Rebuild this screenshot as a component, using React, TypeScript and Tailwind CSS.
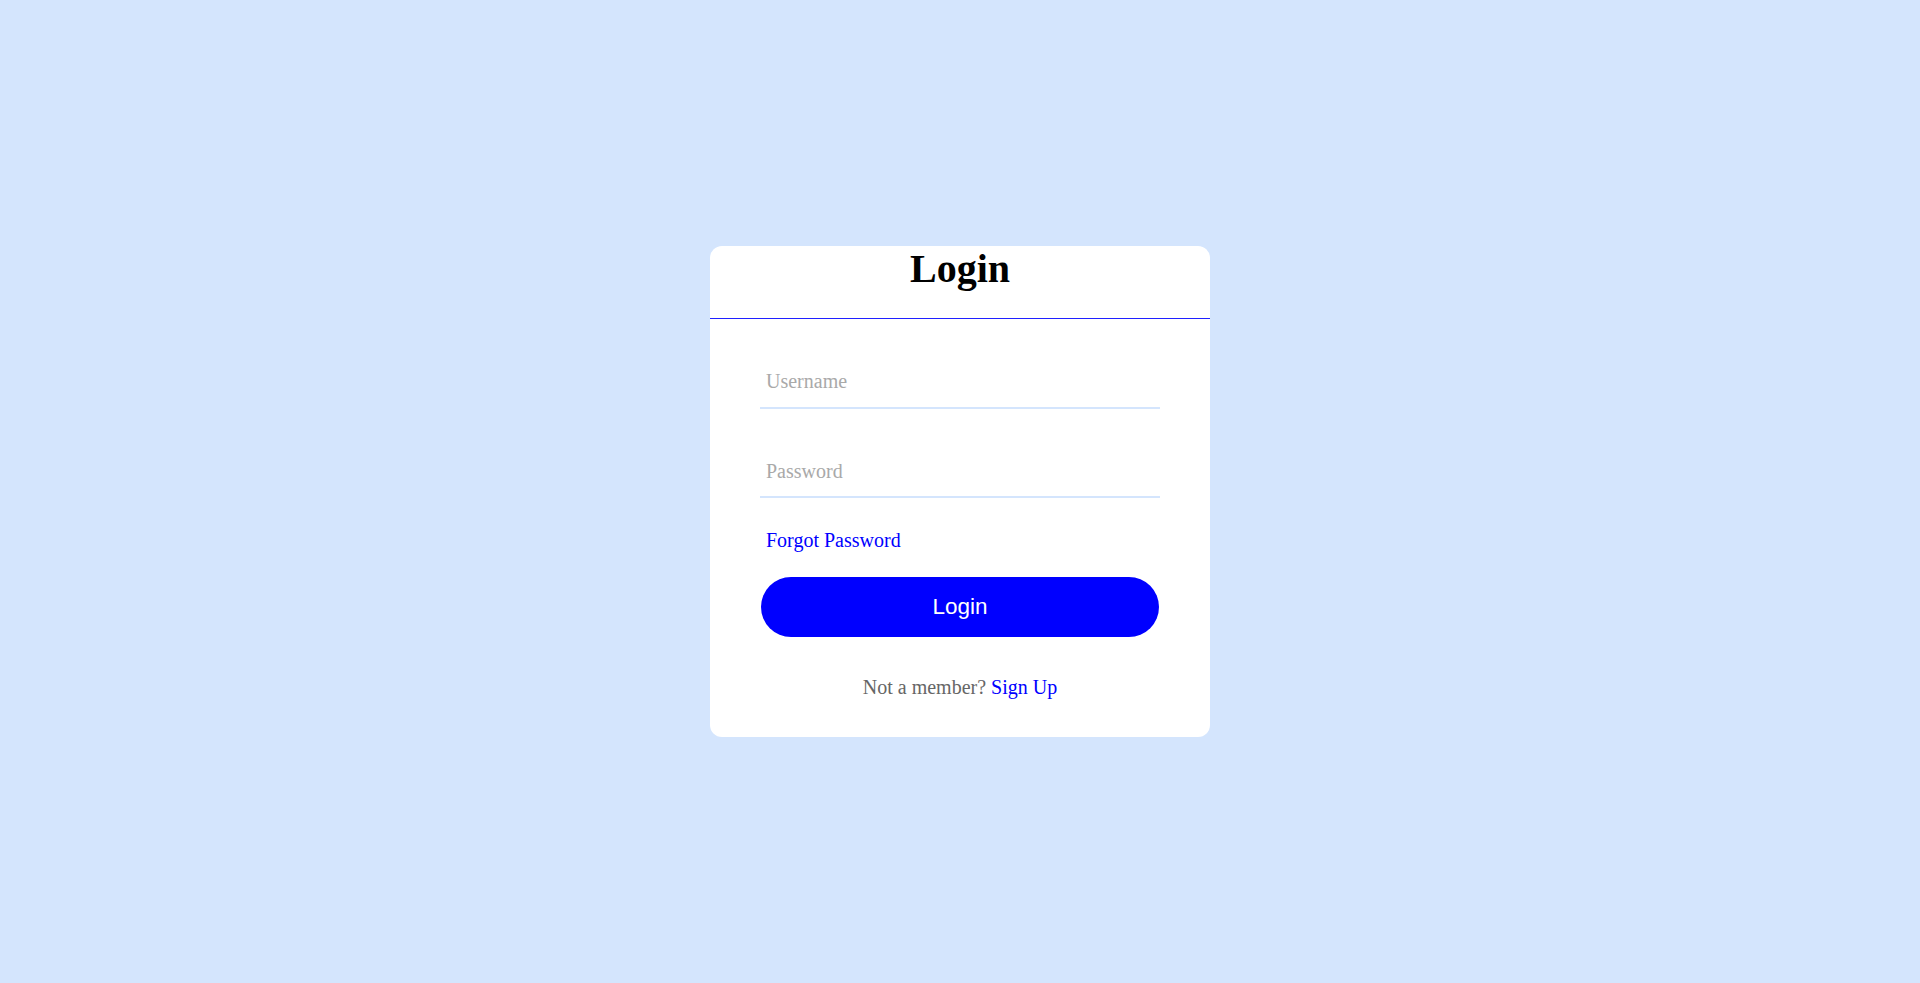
import { useState } from 'react';

const serif = { fontFamily: '"Liberation Serif", "Times New Roman", serif' };

function Field({ placeholder, type = 'text', className = '' }: { placeholder: string; type?: string; className?: string }) {
  const [value, setValue] = useState('');
  return (
    <div className={`border-b-2 border-[#d4e5fd] ${className}`}>
      <input
        type={type}
        value={value}
        onChange={(e) => setValue(e.target.value)}
        placeholder={placeholder}
        className="block h-[50px] w-full bg-transparent px-[6px] text-[20px] text-black outline-none placeholder:text-[#a9a9a9]"
        style={serif}
      />
    </div>
  );
}

export default function App() {
  return (
    <div className="flex min-h-screen items-center justify-center bg-[#d4e5fd]" style={serif}>
      <div className="flex w-[500px] flex-col rounded-[12px] bg-white">
        <h1 className="border-b border-[#2020ff] pb-[26px] text-center text-[40px] font-bold leading-[46px] text-black">Login</h1>

        <form className="flex flex-col px-[50px]" onSubmit={(e) => e.preventDefault()}>
          <Field placeholder="Username" className="mt-[37.5px]" />
          <Field placeholder="Password" type="password" className="mt-[37.5px]" />

          <a href="#" className="ml-[6px] mt-[31px] self-start text-[20px] leading-[23px] text-[#0000ff]">
            Forgot Password
          </a>

          <button
            type="submit"
            className="mx-auto mt-[25px] h-[60px] w-[398px] rounded-full bg-[#0000ff] text-[22.5px] text-white"
            style={{ fontFamily: '"Liberation Sans", Arial, sans-serif' }}
          >
            Login
          </button>

          <p className="mb-[37.5px] mt-[39px] text-center text-[20px] leading-[23px] text-[#666666]">
            Not a member? <a href="#" className="text-[#0000ff]">Sign Up</a>
          </p>
        </form>
      </div>
    </div>
  );
}
